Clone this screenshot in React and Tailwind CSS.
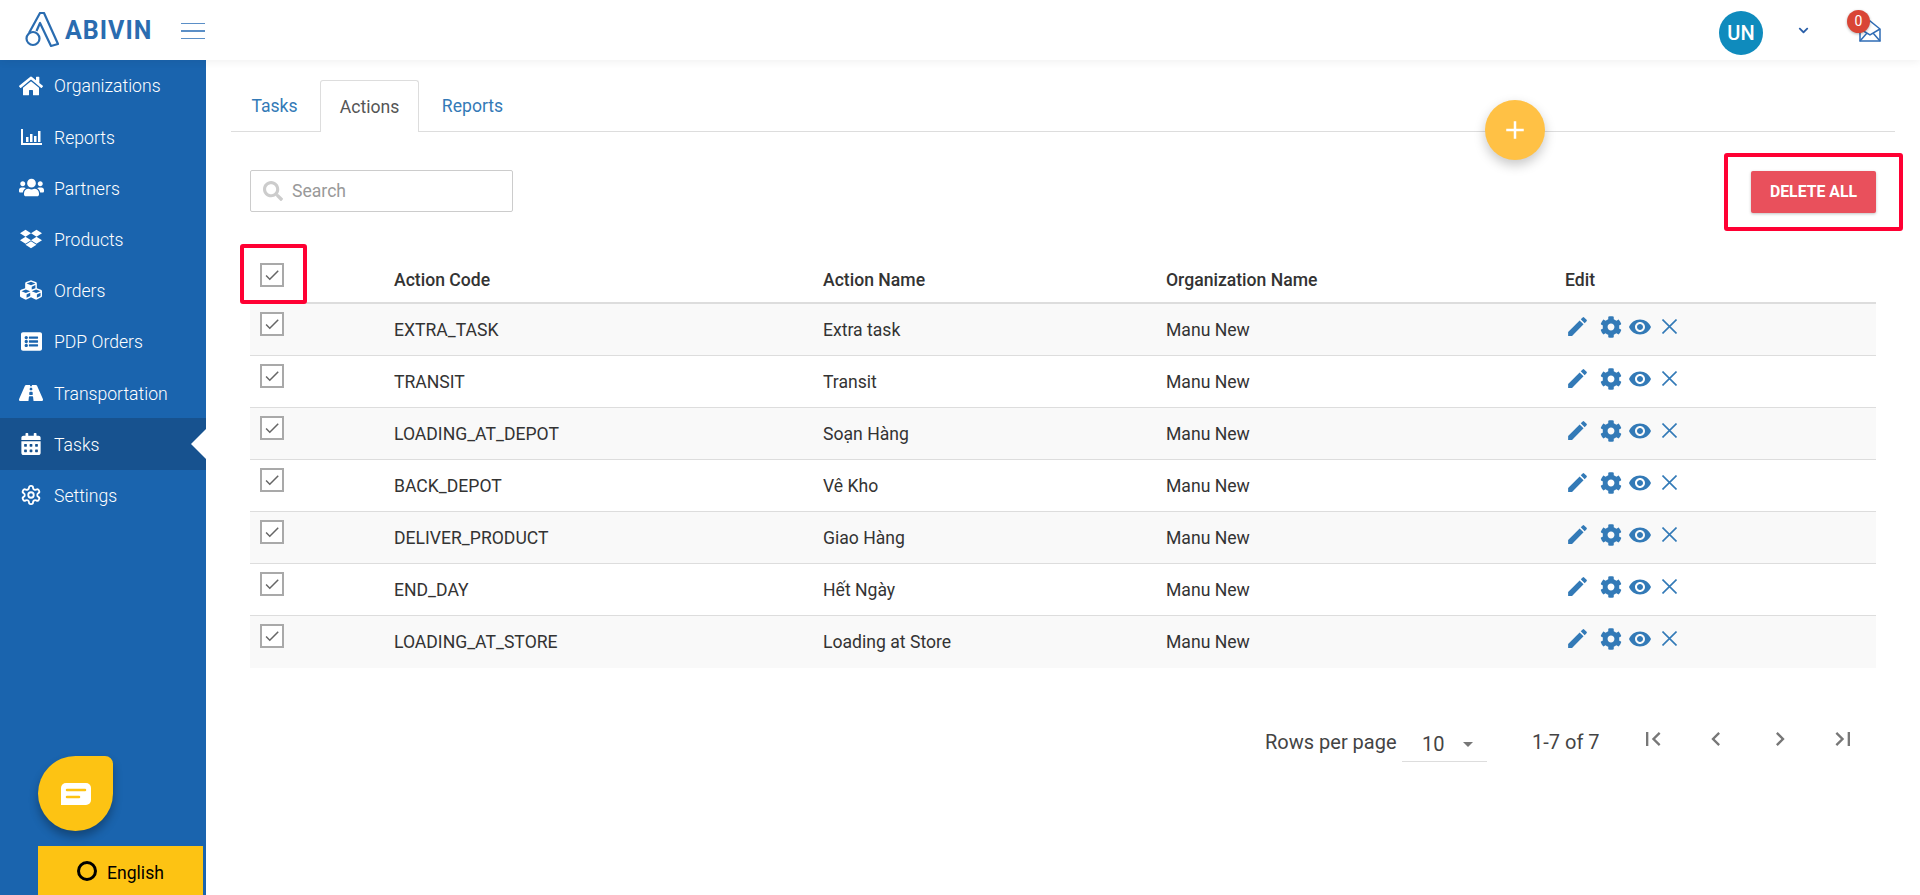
import { FaHome, FaUsers, FaDropbox, FaCubes, FaListAlt, FaRoad, FaCalendarAlt, FaCog, FaSearch, FaChevronDown } from "react-icons/fa";
import { MdEdit, MdVisibility, MdCheck, MdFirstPage, MdLastPage, MdChevronLeft, MdChevronRight, MdArrowDropDown, MdAdd } from "react-icons/md";
import { LuSettings } from "react-icons/lu";

function BarChartIcon({ className }) {
  return (
    <svg viewBox="0 0 21 16" className={className} fill="currentColor">
      <path d="M0 0h2v14h19v2H0z" />
      <path d="M5 8h2.500v5H5zM9 5h2.500v8H9zM13 7h2.500v6H13zM17 2h2.500v11H17z" />
    </svg>
  );
}

const menu = [
  { label: "Organizations", icon: <FaHome className="w-[24px] h-[24px]" /> },
  { label: "Reports", icon: <BarChartIcon className="w-[21px] h-[16px]" /> },
  { label: "Partners", icon: <FaUsers className="w-[25px] h-[25px]" /> },
  { label: "Products", icon: <FaDropbox className="w-[22px] h-[22px]" /> },
  { label: "Orders", icon: <FaCubes className="w-[22px] h-[22px]" /> },
  { label: "PDP Orders", icon: <FaListAlt className="w-[21px] h-[21px]" /> },
  { label: "Transportation", icon: <FaRoad className="w-[24px] h-[24px]" /> },
  { label: "Tasks", icon: <FaCalendarAlt className="w-[20px] h-[22px]" />, active: true },
  { label: "Settings", icon: <LuSettings className="w-[22px] h-[22px]" /> },
];

const rows = [
  ["EXTRA_TASK", "Extra task"],
  ["TRANSIT", "Transit"],
  ["LOADING_AT_DEPOT", "Soạn Hàng"],
  ["BACK_DEPOT", "Vê Kho"],
  ["DELIVER_PRODUCT", "Giao Hàng"],
  ["END_DAY", "Hết Ngày"],
  ["LOADING_AT_STORE", "Loading at Store"],
];

function Check() {
  return (
    <span className="flex w-[24px] h-[24px] items-center justify-center border-[2px] border-[#a9a9a9] bg-white text-[#666]">
      <MdCheck className="w-[18px] h-[18px]" />
    </span>
  );
}

function Logo() {
  return (
    <div className="flex items-center">
      <svg viewBox="0 0 34 36" className="w-[34px] h-[36px]" fill="none" stroke="#2a6cb0" strokeWidth="2.200">
        <circle cx="8" cy="26.500" r="6.500" />
        <path d="M4 21 L15 1 h4 L33 32 l-7 2 L15 11 L11.500 19" strokeLinejoin="round" />
      </svg>
      <span className="ml-[6px] text-[25px] leading-none font-bold tracking-[1px] text-[#2a6cb0]">ABIVIN</span>
    </div>
  );
}

export default function App() {
  return (
    <div className="h-[895px] overflow-hidden flex flex-col bg-white font-['Roboto',sans-serif] text-[17.600px] text-[#333]">
      <header className="relative z-10 h-[60px] shrink-0 flex items-center bg-white shadow-[0_2px_8px_rgba(0,0,0,0.06)]">
        <div className="pl-[25px]">
          <Logo />
        </div>
        <div className="ml-[29px] w-[24px] flex flex-col gap-[6px] mt-[2px]">
          <span className="h-px bg-[#5b8fc7]" />
          <span className="h-[2px] bg-[#5b8fc7]" />
          <span className="h-px bg-[#5b8fc7]" />
        </div>
        <div className="ml-auto flex items-center pr-[39px]">
          <span className="flex w-[44px] h-[44px] items-center justify-center rounded-full bg-[#0f8bbd] text-white text-[20px] font-medium mt-[6px]">UN</span>
          <FaChevronDown className="ml-[35px] w-[11px] h-[11px] text-[#2a5fa8]" />
          <div className="relative ml-[50px] mt-[2px]">
            <svg viewBox="0 0 22 22" className="w-[22px] h-[22px]" fill="none" stroke="#2f6cb5" strokeWidth="1.500">
              <path d="M1 9 L11 1 L21 9 V21 H1 Z" />
              <path d="M1 9 L11 15 L21 9M1 21 L8 13M21 21 L14 13" />
            </svg>
            <span className="absolute -left-[12px] -top-[10px] flex w-[23px] h-[23px] items-center justify-center rounded-full bg-[#d94535] text-white text-[14px] shadow-[0_1px_3px_rgba(0,0,0,0.3)]">0</span>
          </div>
        </div>
      </header>

      <div className="flex flex-1 min-h-0">
        <aside className="relative w-[206px] shrink-0 flex flex-col bg-[#1a64ae] text-white font-light">
          <nav>
            {menu.map((m) => (
              <div
                key={m.label}
                className={`relative flex h-[51.200px] items-center ${m.active ? "bg-[#17528f]" : ""}`}
              >
                <span className="flex w-[54px] justify-center pl-[8px] shrink-0">{m.icon}</span>
                <span className="pt-[2px]">{m.label}</span>
                {m.active && (
                  <span className="absolute right-0 top-1/2 -translate-y-1/2 border-y-[15px] border-y-transparent border-r-[15px] border-r-white" />
                )}
              </div>
            ))}
          </nav>
          <div className="mt-auto pl-[38px] pr-[3px]">
            <div className="flex h-[75px] w-[75px] items-center justify-center rounded-[37.500px] rounded-tr-[8px] bg-[#fdc313] shadow-[0_6px_10px_rgba(0,0,0,0.3)]">
              <svg viewBox="0 0 30 22" className="w-[30px] h-[22px]">
                <path d="M5 0h20a5 5 0 0 1 5 5v12a5 5 0 0 1-5 5H0V5a5 5 0 0 1 5-5z" fill="#fff" />
                <path d="M6 7h18M6 14h12" stroke="#fdc313" strokeWidth="2.500" strokeLinecap="round" />
              </svg>
            </div>
            <div className="mt-[15px] flex h-[49px] items-center bg-[#fdc313] pl-[39px] text-black font-normal">
              <span className="w-[20px] h-[20px] rounded-full border-[3px] border-black" />
              <span className="ml-[10px] mt-[6px]">English</span>
            </div>
          </div>
        </aside>

        <main className="relative flex-1 min-w-0 pt-[20px] px-[25px]">
          <div className="flex h-[52px] border-b border-[#ddd]">
            <span className="flex h-[51px] w-[89px] items-center justify-center pr-[2px] pt-[1px] text-[#337ab7]">Tasks</span>
            <span className="flex h-[52px] w-[99px] items-center justify-center rounded-t-[3px] border border-b-0 border-[#ddd] bg-white pt-[1px] text-[#555]">Actions</span>
            <span className="flex h-[51px] w-[107px] items-center justify-center pt-[1px] text-[#337ab7]">Reports</span>
          </div>
          <button className="absolute left-[1279px] top-[40px] flex h-[60px] w-[60px] items-center justify-center rounded-full bg-[#ffc145] text-white shadow-[0_5px_12px_rgba(0,0,0,0.22)]">
            <MdAdd className="w-[30px] h-[30px]" />
          </button>

          <div className="px-[19px]">
            <div className="mt-[38px] flex items-start justify-between">
              <div className="flex h-[42px] w-[263px] items-center rounded-[2px] border border-[#ccc] pl-[12px] text-[#999]">
                <FaSearch className="w-[20px] h-[20px] text-[#ccc]" />
                <span className="ml-[9px]">Search</span>
              </div>
              <div className="relative mt-px">
                <button className="flex h-[42px] w-[125px] items-center justify-center rounded-[2px] bg-[#e9505c] text-[15.800px] font-bold text-white shadow-[0_1px_3px_rgba(0,0,0,0.25)]">
                  DELETE ALL
                </button>
                <span className="absolute -left-[27px] -top-[18px] h-[78px] w-[179px] rounded-[3px] border-[4px] border-[#ff0033]" />
              </div>
            </div>

            <div className="relative mt-[31px] grid h-[60px] grid-cols-[144px_429px_343px_399px_1fr] border-b-[2px] border-[#ddd] text-[#333]">
              <div className="pl-[10px] pt-[19px]"><Check /></div>
              <div className="flex items-center pt-[15px] font-medium">Action Code</div>
              <div className="flex items-center pt-[15px] font-medium">Action Name</div>
              <div className="flex items-center pt-[15px] font-medium">Organization Name</div>
              <div className="flex items-center pt-[15px] font-medium">Edit</div>
              <span className="absolute -left-[10px] top-0 h-[60px] w-[67px] rounded-[3px] border-[4px] border-[#ff0033]" />
            </div>

            {rows.map((r, i) => (
              <div
                key={r[0]}
                className={`grid h-[52px] grid-cols-[144px_429px_343px_399px_1fr] border-b ${i < rows.length - 1 ? "border-[#ddd]" : "border-transparent"} ${i % 2 === 0 ? "bg-[#f9f9f9]" : "bg-white"}`}
              >
                <div className="pl-[10px] pt-[8px]"><Check /></div>
                <div className="flex items-center pt-[1px]">{r[0]}</div>
                <div className="flex items-center pt-[1px]">{r[1]}</div>
                <div className="flex items-center pt-[1px]">Manu New</div>
                <div className="flex items-start text-[#337ab7]">
                  <MdEdit className="mt-[10px] w-[25px] h-[25px]" />
                  <FaCog className="ml-[10px] mt-[12px] w-[22px] h-[22px]" />
                  <MdVisibility className="ml-[6px] mt-[11px] w-[24px] h-[24px]" />
                  <svg viewBox="0 0 15 15" className="ml-[10px] mt-[15px] w-[15px] h-[15px]" stroke="currentColor" strokeWidth="1.600">
                    <path d="M0.500 0.500 L14.500 14.500M14.500 0.500 L0.500 14.500" />
                  </svg>
                </div>
              </div>
            ))}

            <div className="mt-[44px] flex items-start text-[20px] text-[#444] pl-[1015px]">
              <span className="pt-[15px] w-[137px] whitespace-nowrap">Rows per page</span>
              <div className="flex h-[35px] w-[85px] items-center border-b border-[#ddd] pl-[20px] mt-[15px]">
                <span>10</span>
                <MdArrowDropDown className="ml-[12px] w-[24px] h-[24px] text-[#777]" />
              </div>
              <span className="ml-[45px] pt-[15px] whitespace-nowrap">1-7 of 7</span>
              <div className="ml-[39px] mt-[13px] flex gap-[35.500px] text-[#777]">
                <MdFirstPage className="w-[28px] h-[28px]" />
                <MdChevronLeft className="w-[28px] h-[28px]" />
                <MdChevronRight className="w-[28px] h-[28px]" />
                <MdLastPage className="w-[28px] h-[28px]" />
              </div>
            </div>
          </div>
        </main>
      </div>
    </div>
  );
}
